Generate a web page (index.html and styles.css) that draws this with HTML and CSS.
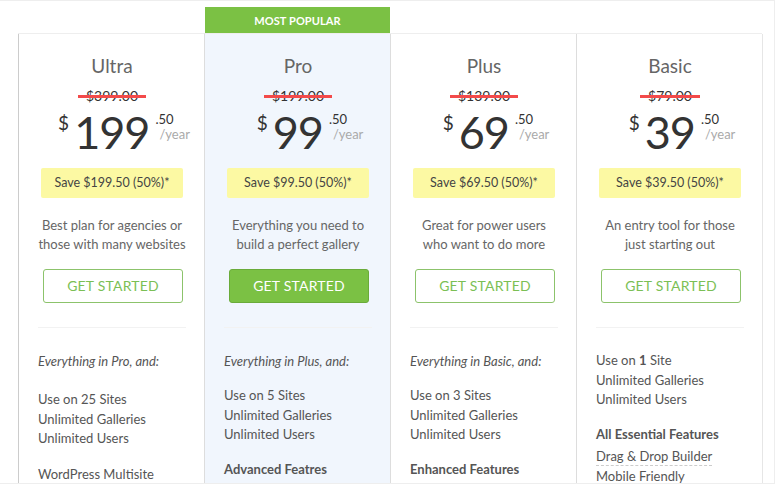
FILE: index.html
```html
<!DOCTYPE html>
<html>
<head>
<meta charset="utf-8">
<link rel="stylesheet" href="styles.css">
</head>
<body>
<div class="frame">
  <div class="plans">
    <div class="plan">
      <div class="ribbon"></div>
      <div class="plan-body first">
        <h2 class="plan-name">Ultra</h2>
        <div class="old-price"><span class="strike">$399.00</span></div>
        <div class="price"><span class="cur">$</span><span class="amt">199</span><span class="frac"><span class="cents">.50</span><span class="term">/year</span></span></div>
        <div class="save">Save $199.50 (50%)*</div>
        <p class="desc">Best plan for agencies or<br>those with many websites</p>
        <a class="btn">GET STARTED</a>
        <div class="sep"></div>
        <div class="features">
          <p class="intro">Everything in Pro, and:</p>
          <ul class="list list-low">
            <li>Use on 25 Sites</li>
            <li>Unlimited Galleries</li>
            <li>Unlimited Users</li>
          </ul>
          <ul class="list">
            <li>WordPress Multisite</li>
          </ul>
        </div>
      </div>
    </div>
    <div class="plan popular">
      <div class="ribbon">MOST POPULAR</div>
      <div class="plan-body">
        <h2 class="plan-name">Pro</h2>
        <div class="old-price"><span class="strike">$199.00</span></div>
        <div class="price"><span class="cur">$</span><span class="amt">99</span><span class="frac"><span class="cents">.50</span><span class="term">/year</span></span></div>
        <div class="save">Save $99.50 (50%)*</div>
        <p class="desc">Everything you need to<br>build a perfect gallery</p>
        <a class="btn btn-solid">GET STARTED</a>
        <div class="sep"></div>
        <div class="features">
          <p class="intro">Everything in Plus, and:</p>
          <ul class="list">
            <li>Use on 5 Sites</li>
            <li>Unlimited Galleries</li>
            <li>Unlimited Users</li>
          </ul>
          <p class="group">Advanced Featres</p>
        </div>
      </div>
    </div>
    <div class="plan">
      <div class="ribbon"></div>
      <div class="plan-body">
        <h2 class="plan-name">Plus</h2>
        <div class="old-price"><span class="strike">$139.00</span></div>
        <div class="price"><span class="cur">$</span><span class="amt">69</span><span class="frac"><span class="cents">.50</span><span class="term">/year</span></span></div>
        <div class="save">Save $69.50 (50%)*</div>
        <p class="desc">Great for power users<br>who want to do more</p>
        <a class="btn">GET STARTED</a>
        <div class="sep"></div>
        <div class="features">
          <p class="intro">Everything in Basic, and:</p>
          <ul class="list">
            <li>Use on 3 Sites</li>
            <li>Unlimited Galleries</li>
            <li>Unlimited Users</li>
          </ul>
          <p class="group">Enhanced Features</p>
        </div>
      </div>
    </div>
    <div class="plan">
      <div class="ribbon"></div>
      <div class="plan-body last">
        <h2 class="plan-name">Basic</h2>
        <div class="old-price"><span class="strike">$79.00</span></div>
        <div class="price"><span class="cur">$</span><span class="amt">39</span><span class="frac"><span class="cents">.50</span><span class="term">/year</span></span></div>
        <div class="save">Save $39.50 (50%)*</div>
        <p class="desc">An entry tool for those<br>just starting out</p>
        <a class="btn">GET STARTED</a>
        <div class="sep"></div>
        <div class="features">
          <ul class="list list-top">
            <li>Use on <b>1</b> Site</li>
            <li>Unlimited Galleries</li>
            <li>Unlimited Users</li>
          </ul>
          <p class="group group-tight">All Essential Features</p>
          <ul class="list">
            <li><span class="dotted">Drag &amp; Drop Builder</span></li>
            <li class="spaced">Mobile Friendly</li>
          </ul>
        </div>
      </div>
    </div>
  </div>
</div>
</body>
</html>
```

FILE: styles.css
```css
* { box-sizing: border-box; }
html, body { margin: 0; padding: 0; background: #fff; }
body {
  font-family: "Lato", "Noto Sans", sans-serif;
  color: #555;
  width: 775px;
  height: 484px;
  overflow: hidden;
}
.frame {
  width: 775px;
  height: 484px;
  border-top: 1px solid #eee;
  border-right: 1px solid #eee;
  border-bottom: 1px solid #eee;
  padding: 6px 0 0 18px;
  overflow: hidden;
}
.plans {
  display: flex;
  width: 745px;
}
.plan {
  width: 186px;
  display: flex;
  flex-direction: column;
}
.ribbon {
  height: 27px;
  border-bottom: 1px solid #eee;
}
.popular .ribbon {
  background: #7bc144;
  color: #fff;
  font-size: 11px;
  font-weight: 700;
  text-align: center;
  line-height: 28px;
  margin-left: 1px;
  border-bottom: none;
  height: 26px;
  letter-spacing: 0.1px;
  overflow: hidden;
}
.plan-body {
  border-left: 1px solid #ddd;
  height: 460px;
  padding: 0 18px 0 19px;
  text-align: center;
}
.plan-body.first { border-left-color: #ccc; }
.plan-body.last { border-right: 1px solid #e6e6e6; width: 187px; }
.popular .plan-body {
  background: #f1f6fd;
  border-top: 1px solid #eee;
}
.plan-name {
  margin: 0;
  padding-top: 20px;
  font-size: 19px;
  line-height: 24px;
  font-weight: 400;
  color: #666;
}
.old-price {
  margin-top: 9px;
  height: 18px;
  line-height: 18px;
  font-size: 14px;
  color: #333;
}
.strike {
  position: relative;
  display: inline-block;
}
.strike::after {
  content: "";
  position: absolute;
  left: -8px;
  right: -8px;
  top: 8px;
  height: 2.5px;
  background: #f34a4a;
}
.price {
  display: flex;
  justify-content: center;
  align-items: flex-start;
  padding-left: 24px;
  margin-top: 4px;
  height: 48px;
  color: #333;
}
.cur {
  font-size: 19px;
  line-height: 22px;
  margin-top: 3px;
  margin-right: 5px;
}
.amt {
  font-size: 45px;
  font-weight: 400;
  line-height: 46px;
  letter-spacing: -1px;
}
.frac {
  display: flex;
  flex-direction: column;
  align-items: flex-start;
  margin-left: 6px;
  text-align: left;
}
.cents {
  font-size: 13px;
  line-height: 14px;
  margin-top: 3px;
}
.term {
  font-size: 13px;
  line-height: 16px;
  color: #aaa;
  padding-left: 4px;
}
.save {
  margin: 11px 3px 0 3px;
  height: 30px;
  line-height: 30px;
  background: #fcf9a3;
  border-radius: 2px;
  font-size: 12.5px;
  color: #444;
}
.desc {
  margin: 18px -6px 0;
  font-size: 13px;
  line-height: 19px;
  color: #666;
  white-space: nowrap;
}
.btn {
  display: block;
  margin: 15px 3px 0 5px;
  height: 34px;
  line-height: 32px;
  border: 1px solid #8cc36b;
  border-radius: 3px;
  color: #7bbf55;
  font-size: 14px;
  letter-spacing: 0.2px;
}
.btn-solid {
  background: #7bc144;
  border-color: #6aab3a;
  color: #fff;
}
.sep {
  margin-top: 24px;
  height: 1px;
  background: #f2f2f2;
}
.features {
  text-align: left;
  font-size: 13px;
  color: #555;
}
.intro {
  margin: 24px 0 0;
  font-style: italic;
  line-height: 19px;
}
.list {
  list-style: none;
  margin: 15px 0 0;
  padding: 0;
  line-height: 19.5px;
}
.list-low { margin-top: 19px; }
.list-top { margin-top: 23px; }
.list + .list { margin-top: 16px; }
.group {
  margin: 15px 0 0;
  font-weight: 700;
  line-height: 19px;
}
.group-tight { margin-top: 15px; }
.group + .list { margin-top: 3px; }
.dotted { border-bottom: 1px dashed #ccc; padding-bottom: 1px; }
.spaced { margin-top: 1px; }
```
